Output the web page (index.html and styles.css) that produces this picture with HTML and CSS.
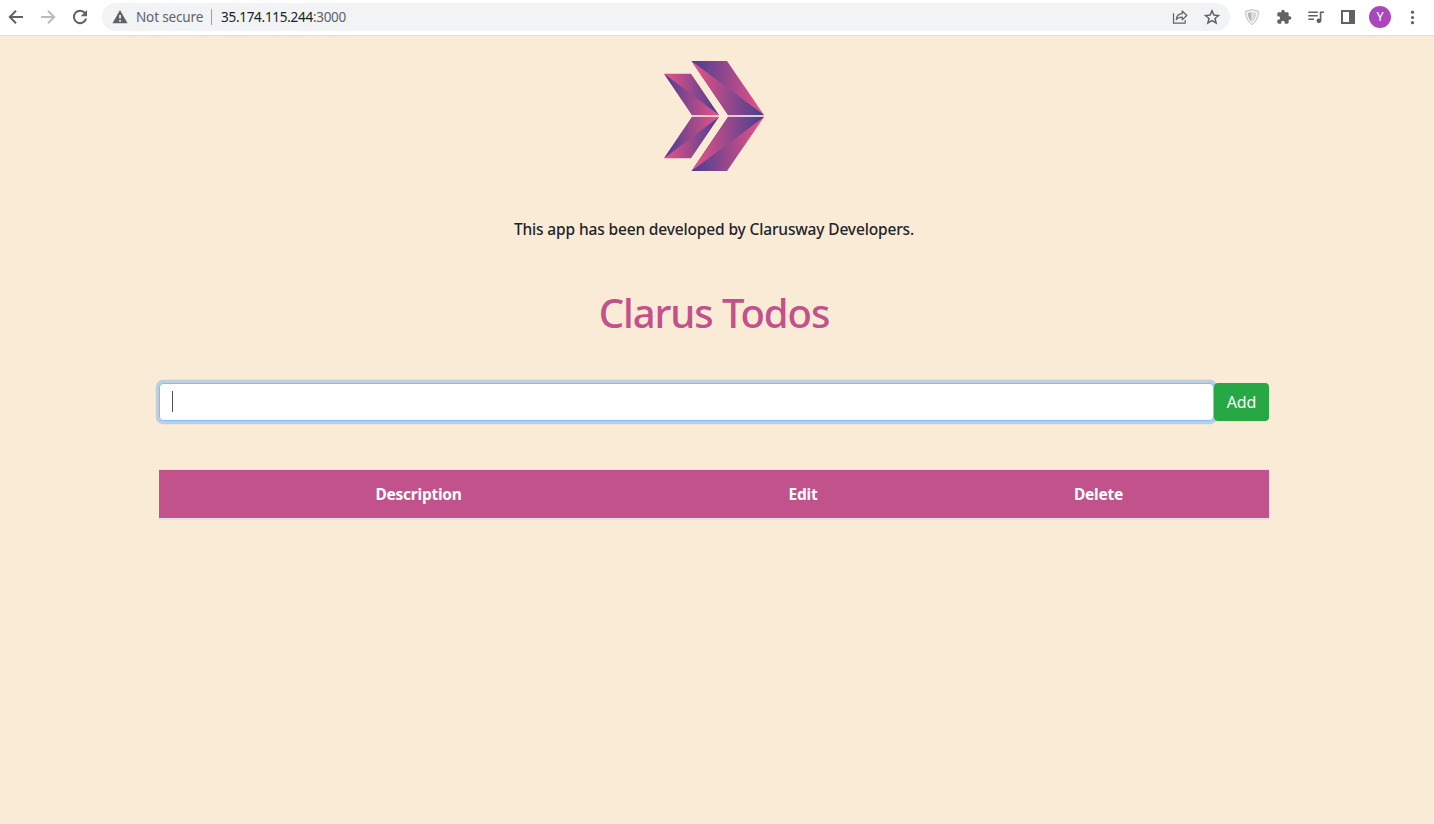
FILE: index.html
```html
<!DOCTYPE html>
<html lang="en">
<head>
<meta charset="utf-8">
<title>Clarus Todos</title>
<link rel="stylesheet" href="styles.css">
</head>
<body>
<header class="toolbar">
  <nav class="nav">
    <svg class="nav-icon" viewBox="0 0 16 16"><path d="M15 8H2M8 1.7 1.8 8 8 14.3" fill="none" stroke="#5f6368" stroke-width="2"/></svg>
    <svg class="nav-icon" viewBox="0 0 16 16"><path d="M1 8h13M8 1.7 14.2 8 8 14.3" fill="none" stroke="#babcbe" stroke-width="2"/></svg>
    <svg class="nav-icon" viewBox="0 0 16 16"><path d="M13.3 4.5A6.2 6.2 0 1 0 14.1 9.5" fill="none" stroke="#5f6368" stroke-width="2"/><path d="M15 1v6.3H8.7z" fill="#5f6368"/></svg>
  </nav>
  <div class="address">
    <svg class="warn" viewBox="0 0 16 14"><path d="M8 0 15.5 13.3H.5z" fill="#5f6368"/><path d="M7.2 5h1.7v3.6H7.2zM7.2 10h1.7v1.7H7.2z" fill="#f1f3f4"/></svg>
    <span class="secure">Not secure</span>
    <span class="divider"></span>
    <span class="url">35.174.115.244<span class="port">:3000</span></span>
    <svg class="share" viewBox="0 0 16 16"><path d="M1.5 4.3v9.900h11.700V11" fill="none" stroke="#5f6368" stroke-width="1.2"/><path d="M4.2 10.700c.4-4 2.600-5.800 6-6V2l4.600 4.500-4.600 4.300V8.100c-2.600 0-4.500.7-6 2.600z" fill="none" stroke="#5f6368" stroke-width="1.2" stroke-linejoin="round"/></svg>
    <svg class="star" viewBox="0 0 16 16"><path d="M8 1.800 9.900 6.100 14.500 6.500 11 9.500 12.100 14 8 11.600 3.900 14 5 9.500 1.500 6.500 6.100 6.100z" fill="none" stroke="#5f6368" stroke-width="1.5"/></svg>
  </div>
  <div class="actions">
    <svg viewBox="0 0 16 16"><path d="M8 .6 14.400 2.100C14.400 8.500 12.500 12.800 8 15.500 3.500 12.800 1.600 8.500 1.600 2.100z" fill="#f3f3f3" stroke="#bdbdbd" stroke-width="1"/><path d="M8 3 12.200 3.900C12.100 8 10.800 11 8 13z" fill="#d5d5d5"/><path d="M8 3 3.800 3.900C3.900 8 5.200 11 8 13z" fill="#b5b5b5"/><path d="M8 3v10" stroke="#fff" stroke-width=".8"/></svg>
    <svg viewBox="0 0 24 24"><path d="M20.500 11H19V7c0-1.100-.9-2-2-2h-4V3.500a2.500 2.500 0 0 0-5 0V5H4c-1.100 0-2 .9-2 2v3.800h1.500a2.700 2.700 0 0 1 0 5.400H2V20c0 1.100.9 2 2 2h3.800v-1.500a2.700 2.700 0 0 1 5.400 0V22H17c1.100 0 2-.9 2-2v-4h1.500a2.500 2.500 0 0 0 0-5z" fill="#5f6368"/></svg>
    <svg viewBox="0 0 16 16"><path d="M.3 3.200h9.500M.3 6.700h9.500M.3 10.200h5.700" stroke="#5f6368" stroke-width="1.500"/><path d="M12.600 12V3.200H16" fill="none" stroke="#5f6368" stroke-width="1.600"/><circle cx="10.900" cy="11.800" r="2.400" fill="#5f6368"/></svg>
    <svg viewBox="0 0 16 16"><path d="M1 1h14v14H1zM3 3v10h6V3z" fill="#5f6368" fill-rule="evenodd"/></svg>
    <span class="avatar">Y</span>
    <svg viewBox="0 0 16 16"><g fill="#5f6368"><circle cx="8.500" cy="3.200" r="1.600"/><circle cx="8.500" cy="8.500" r="1.600"/><circle cx="8.500" cy="13.700" r="1.600"/></g></svg>
  </div>
</header>
<main class="page">
  <svg class="logo" viewBox="0 0 100 110">
    <defs>
      <linearGradient id="bp"><stop offset="0" stop-color="#443f92"/><stop offset="1" stop-color="#ed5286"/></linearGradient>
      <linearGradient id="pb"><stop offset="0" stop-color="#ed5286"/><stop offset="1" stop-color="#443f92"/></linearGradient>
      <g id="half">
        <path d="M27.500 0H63L100 54H64z" fill="url(#bp)"/>
        <path d="M27.500 0 100 54H64z" fill="url(#pb)"/>
        <path d="M0 12.700H27L55 54H28z" fill="url(#pb)"/>
        <path d="M0 12.700 55 54H28z" fill="url(#bp)"/>
      </g>
    </defs>
    <path d="M28 54h27v2H28zM64 54h36v2H64z" fill="#e6cbcf"/>
    <use href="#half"/>
    <use href="#half" transform="matrix(1 0 0 -1 0 110)"/>
  </svg>
  <p class="credit">This app has been developed by Clarusway Developers.</p>
  <h1 class="title">Clarus Todos</h1>
  <form class="todo-form">
    <div class="field"><span class="caret"></span></div>
    <button class="add" type="button">Add</button>
  </form>
  <table class="todos">
    <colgroup><col class="col-desc"><col class="col-edit"><col class="col-delete"></colgroup>
    <thead><tr><th>Description</th><th>Edit</th><th>Delete</th></tr></thead>
  </table>
</main>
</body>
</html>
```
FILE: styles.css
```css
* { box-sizing: border-box; }
body {
  margin: 0;
  height: 824px;
  overflow: hidden;
  background: #faebd7;
  color: #212529;
  font: 16px/24px "Noto Sans", "Open Sans", sans-serif;
}
.toolbar {
  display: flex;
  align-items: flex-start;
  height: 36px;
  padding: 3px 14px 0 8px;
  background: #fff;
  border-bottom: 1px solid #dadce0;
}
.nav { display: flex; gap: 16px; padding-top: 6px; width: 94px; }
.nav-icon { width: 16px; height: 16px; flex: none; }
.address {
  display: flex;
  align-items: center;
  width: 1128px;
  height: 28px;
  padding: 0 10px;
  border-radius: 14px;
  background: #f1f3f4;
  font-size: 13.5px;
  line-height: 28px;
}
.warn { width: 16px; height: 14px; }
.secure { width: 75px; margin-left: 8px; color: #5f6368; white-space: nowrap; letter-spacing: -0.15px; }
.divider { width: 1px; height: 16px; background: #9aa0a6; }
.url { margin-left: 9px; color: #202124; letter-spacing: -0.28px; }
.port { color: #5f6368; }
.share { width: 16px; height: 16px; margin-left: auto; }
.star { width: 16px; height: 16px; margin-left: 16px; }
.actions { display: flex; align-items: center; height: 28px; margin-left: 14px; gap: 16px; }
.actions svg { width: 16px; height: 16px; flex: none; }
.avatar {
  width: 22px;
  height: 22px;
  margin: 0 -3px;
  border-radius: 50%;
  background: #ab47bc;
  color: #fff;
  font: 12px/22px Roboto, sans-serif;
  text-align: center;
}
.page {
  display: flex;
  flex-direction: column;
  align-items: center;
  width: 1110px;
  margin-left: 159px;
  padding-top: 25px;
}
.logo { width: 100px; height: 110px; }
.credit {
  margin: 46px 0 0;
  font-weight: 500;
  font-size: 15.5px;
  letter-spacing: -0.15px;
  white-space: nowrap;
}
.title {
  margin: 48px 0 0;
  color: #c2528b;
  font-size: 40px;
  font-weight: 500;
  line-height: 48px;
  letter-spacing: -1.1px;
  white-space: nowrap;
}
.todo-form { display: flex; width: 100%; margin-top: 46px; }
.field {
  flex: 1;
  height: 38px;
  padding: 7px 12px;
  border: 1px solid #80bdff;
  border-radius: 4px;
  background: #fff;
  box-shadow: 0 0 0 3.2px rgba(0, 123, 255, 0.25);
}
.caret { display: block; width: 1px; height: 21px; background: #495057; }
.add {
  width: 55px;
  height: 38px;
  padding: 0;
  border: 0;
  border-radius: 4px;
  position: relative;
  background: #28a745;
  color: #fff;
  font: inherit;
  letter-spacing: -0.2px;
}
.todos {
  width: 100%;
  margin-top: 48px;
  table-layout: fixed;
  border-collapse: separate;
  border-spacing: 0;
}
.col-desc { width: 519px; }
.col-edit { width: 250px; }
.col-delete { width: 341px; }
.todos th {
  height: 51px;
  padding: 0 0 1px;
  border-top: 1px solid #dee2e6;
  border-bottom: 2px solid #dee2e6;
  background: #c2528b;
  color: #fff;
  font-size: 15.5px;
  font-weight: 700;
  letter-spacing: -0.25px;
  text-align: center;
}
```
